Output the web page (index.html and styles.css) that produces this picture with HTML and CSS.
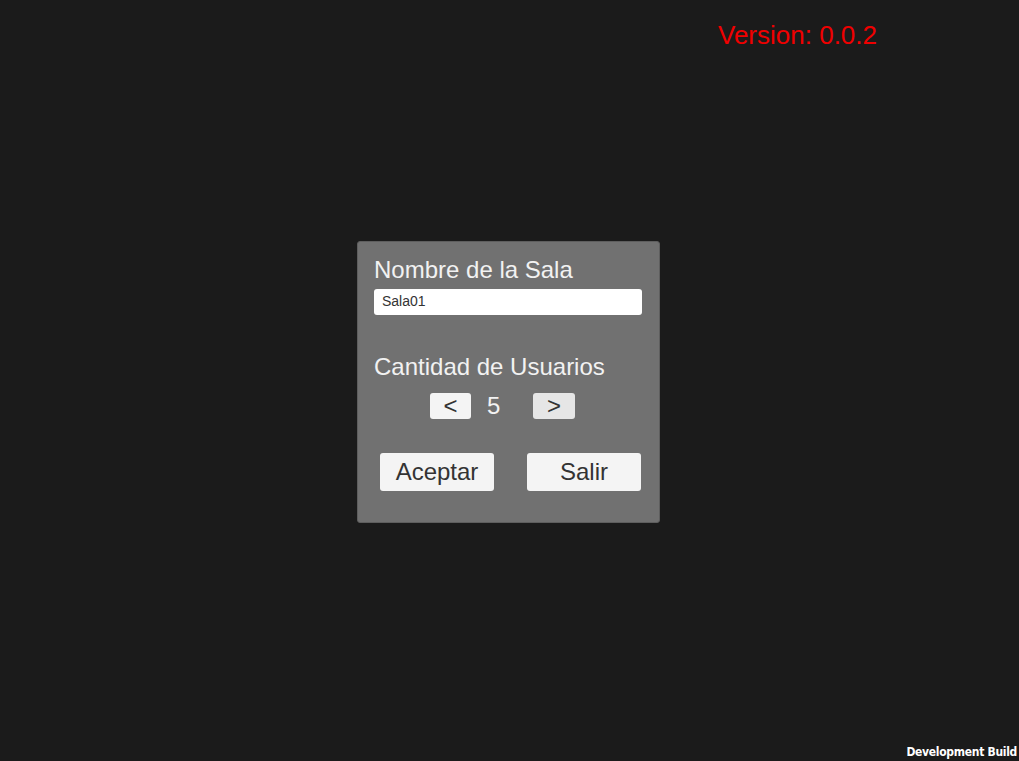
FILE: index.html
```html
<!DOCTYPE html>
<html>
<head>
<meta charset="utf-8">
<link rel="stylesheet" href="styles.css">
</head>
<body>
<div class="screen">
  <div class="version">Version: 0.0.2</div>
  <div class="panel">
    <div class="label">Nombre de la Sala</div>
    <div class="input">Sala01</div>
    <div class="label label2">Cantidad de Usuarios</div>
    <div class="stepper">
      <div class="sbtn">&lt;</div>
      <div class="count">5</div>
      <div class="sbtn sbtn-alt">&gt;</div>
    </div>
    <div class="actions">
      <div class="btn">Aceptar</div>
      <div class="btn">Salir</div>
    </div>
  </div>
  <div class="devbuild">Development Build</div>
</div>
</body>
</html>
```
FILE: styles.css
```css
html, body {
  margin: 0;
  padding: 0;
  background: #1b1b1b;
}
.screen {
  position: relative;
  width: 1019px;
  height: 761px;
  display: flex;
  align-items: center;
  justify-content: center;
  font-family: "Liberation Sans", Arial, sans-serif;
}
.version {
  position: absolute;
  left: 718px;
  top: 20px;
  color: #f00000;
  font-size: 26px;
  line-height: 30px;
}
.devbuild {
  position: absolute;
  right: 2px;
  bottom: 2px;
  color: #ffffff;
  font-family: "DejaVu Sans", sans-serif;
  font-stretch: condensed;
  font-weight: bold;
  font-size: 12px;
  letter-spacing: -0.3px;
  line-height: 14px;
}
.panel {
  box-sizing: border-box;
  width: 303px;
  height: 282px;
  background: #717171;
  border: 1px solid #5e5e5e;
  border-radius: 3px;
  padding: 14px 17px 0 16px;
  display: flex;
  flex-direction: column;
  margin: 2px 2px 0 0;
}
.label {
  color: #f2f2f2;
  font-size: 24px;
  line-height: 28px;
}
.input {
  margin-top: 5px;
  height: 26px;
  background: #ffffff;
  border-radius: 3px;
  color: #333333;
  font-size: 14px;
  line-height: 24px;
  padding-left: 8px;
}
.label2 {
  margin-top: 38px;
}
.stepper {
  margin-top: 12px;
  display: flex;
  align-items: center;
  padding-left: 56px;
}
.sbtn {
  width: 41px;
  height: 26px;
  background: #f4f4f4;
  border-radius: 3px;
  color: #333;
  font-size: 24px;
  line-height: 26px;
  text-align: center;
}
.sbtn-alt {
  width: 42px;
  background: #e6e6e6;
}
.count {
  box-sizing: border-box;
  width: 62px;
  padding-left: 16px;
  color: #f2f2f2;
  font-size: 24px;
  line-height: 26px;
}
.actions {
  margin-top: 34px;
  display: flex;
  padding-left: 6px;
  gap: 33px;
}
.btn {
  width: 114px;
  height: 38px;
  background: #f4f4f4;
  border-radius: 3px;
  color: #333;
  font-size: 24px;
  line-height: 38px;
  text-align: center;
}
```
